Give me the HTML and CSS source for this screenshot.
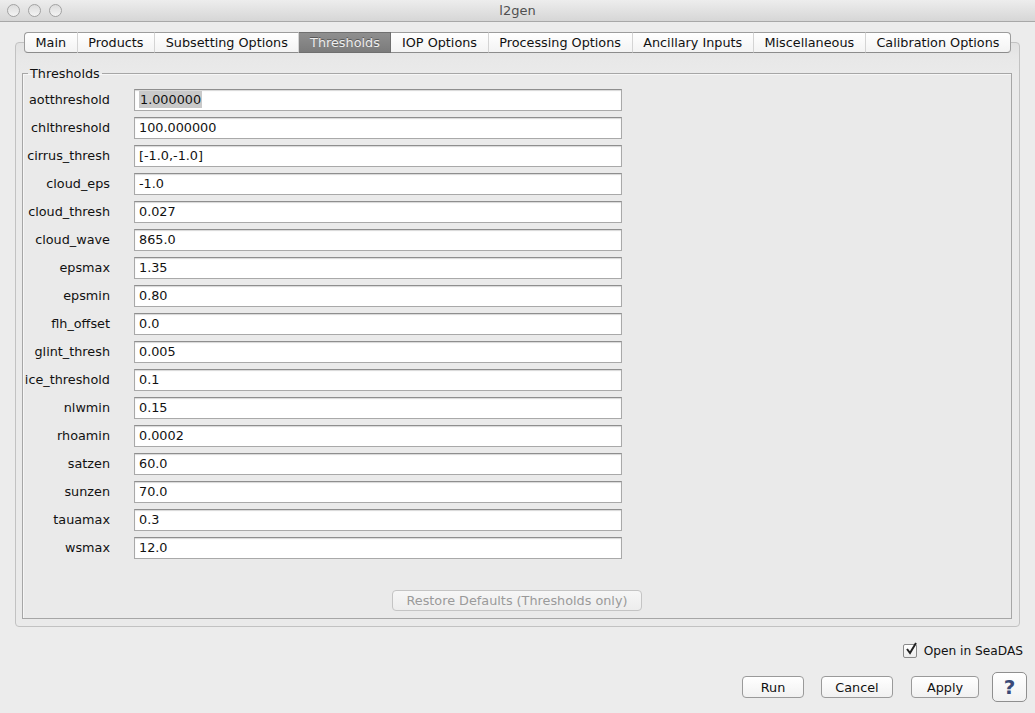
FILE: index.html
```html
<!DOCTYPE html>
<html lang="en">
<head>
    <meta charset="UTF-8">
    <title>l2gen</title>
    <link rel="stylesheet" href="styles.css">
</head>
<body>
    <div class="window">
        <!-- Title bar -->
        <div class="titlebar">
            <div class="lights">
                <span class="light"></span>
                <span class="light"></span>
                <span class="light"></span>
            </div>
            <div class="title">l2gen</div>
        </div>

        <!-- Tabs -->
        <div class="tabs">
            <div class="tab">Main</div>
            <div class="tab">Products</div>
            <div class="tab">Subsetting Options</div>
            <div class="tab active">Thresholds</div>
            <div class="tab">IOP Options</div>
            <div class="tab">Processing Options</div>
            <div class="tab">Ancillary Inputs</div>
            <div class="tab">Miscellaneous</div>
            <div class="tab">Calibration Options</div>
        </div>

        <div class="pane">
            <fieldset class="group">
                <legend>Thresholds</legend>
                <div class="rows" id="rows"></div>
                <div class="restore-row">
                    <button class="btn restore" disabled>Restore Defaults (Thresholds only)</button>
                </div>
            </fieldset>
        </div>

        <div class="open-row">
            <label class="check">
                <span class="box">
                    <svg width="14" height="14" viewBox="0 0 14 14">
                        <path d="M3 7 L6 11 L12 1" fill="none" stroke="#222" stroke-width="2"/>
                    </svg>
                </span>
                Open in SeaDAS
            </label>
        </div>

        <div class="actions">
            <button class="btn act run">Run</button>
            <button class="btn act cancel">Cancel</button>
            <button class="btn act apply">Apply</button>
            <button class="btn help">?</button>
        </div>
    </div>

    <script>
        // threshold params shown on this tab
        const params = [
            ['aotthreshold', '1.000000'],
            ['chlthreshold', '100.000000'],
            ['cirrus_thresh', '[-1.0,-1.0]'],
            ['cloud_eps', '-1.0'],
            ['cloud_thresh', '0.027'],
            ['cloud_wave', '865.0'],
            ['epsmax', '1.35'],
            ['epsmin', '0.80'],
            ['flh_offset', '0.0'],
            ['glint_thresh', '0.005'],
            ['ice_threshold', '0.1'],
            ['nlwmin', '0.15'],
            ['rhoamin', '0.0002'],
            ['satzen', '60.0'],
            ['sunzen', '70.0'],
            ['tauamax', '0.3'],
            ['wsmax', '12.0']
        ];

        const rows = document.getElementById('rows');
        params.forEach((p, i) => {
            const label = document.createElement('div');
            label.className = 'label';
            label.textContent = p[0];
            const field = document.createElement('div');
            field.className = 'field';
            if (i === 0) {
                field.innerHTML = '<span class="sel">' + p[1] + '</span>';
            } else {
                field.textContent = p[1];
            }
            rows.appendChild(label);
            rows.appendChild(field);
        });
    </script>
</body>
</html>
```

FILE: styles.css
```css
/* General */
html, body {
    margin: 0;
    padding: 0;
}

body {
    font-family: 'Lucida Grande', 'DejaVu Sans', sans-serif;
    font-size: 12.8px;
    color: #111;
    background-color: #ececec;
    width: 1035px;
    height: 713px;
    overflow: hidden;
}

.window {
    display: flex;
    flex-direction: column;
    height: 713px;
}

/* Title bar */
.titlebar {
    height: 21px;
    border-bottom: 1px solid #a8a8a8;
    background: linear-gradient(#ededed, #d6d6d6);
    display: flex;
    align-items: center;
    position: relative;
}

.lights {
    display: flex;
    gap: 8px;
    padding-left: 7px;
}

.light {
    width: 11px;
    height: 11px;
    border-radius: 50%;
    border: 1px solid #a2a2a2;
    background: linear-gradient(#dcdcdc, #f4f4f4);
}

.title {
    position: absolute;
    left: 0;
    right: 0;
    text-align: center;
    color: #505050;
    font-size: 13px;
}

/* Tabs */
.tabs {
    display: flex;
    justify-content: center;
    margin-top: 10px;
    margin-bottom: -11px;
    position: relative;
    z-index: 1;
}

.tab {
    height: 19px;
    line-height: 19px;
    padding: 0 10.6px;
    background: linear-gradient(#ffffff, #f3f3f3);
    border-top: 1px solid #9c9c9c;
    border-bottom: 1px solid #8c8c8c;
    border-right: 1px solid #d4d4d4;
}

.tab:first-child {
    border-left: 1px solid #9c9c9c;
    border-radius: 4px 0 0 4px;
}

.tab:last-child {
    border-right: 1px solid #9c9c9c;
    border-radius: 0 4px 4px 0;
}

.tab.active {
    background: linear-gradient(#8f8f8f, #7b7b7b);
    color: #eeeeee;
    border-color: #6f6f6f;
    text-shadow: 0 -1px 0 #5a5a5a;
}

/* Tab pane */
.pane {
    margin: 0 15px;
    height: 583px;
    border: 1px solid #c2c2c2;
    border-radius: 4px;
    background: linear-gradient(#e2e2e2 0, #e8e8e8 16px, #eaeaea 30px);
    padding: 0 7px 0 6px;
    display: flex;
}

.group {
    flex: 1;
    margin: 23px 0 7px 0;
    padding: 0;
    border: 1px solid #a6a6a6;
    box-shadow: inset 1px 1px 0 #f6f6f6;
    display: flex;
    flex-direction: column;
    min-width: 0;
}

.group legend {
    margin-left: 5px;
    padding: 0 2px;
    color: #111;
}

/* Rows */
.rows {
    display: grid;
    grid-template-columns: 87px 488px;
    column-gap: 24px;
    row-gap: 6px;
    padding-top: 8px;
}

.label {
    text-align: right;
    line-height: 22px;
    height: 22px;
}

.field {
    height: 20px;
    line-height: 20px;
    border: 1px solid #a9a9a9;
    border-top-color: #8e8e8e;
    background-color: #fff;
    box-shadow: inset 0 1px 1px #d8d8d8;
    padding-left: 4px;
}

.sel {
    background-color: #c9c9c9;
    padding: 1px 1px;
}

.restore-row {
    margin-top: auto;
    display: flex;
    justify-content: center;
    padding-bottom: 7px;
}

/* Buttons */
.btn {
    font-family: inherit;
    font-size: 12.8px;
    border: 1px solid #9a9a9a;
    border-radius: 4px;
    background: linear-gradient(#ffffff, #f1f1f1);
    color: #111;
    padding: 0;
}

.restore {
    width: 250px;
    height: 21px;
    color: #9a9a9a;
    border-color: #c4c4c4;
    background: linear-gradient(#f6f6f6, #ededed);
}

/* Open in SeaDAS */
.open-row {
    display: flex;
    justify-content: flex-end;
    padding: 17px 12px 0 0;
}

.check {
    display: flex;
    align-items: center;
    gap: 7px;
    font-size: 12.2px;
}

.box {
    width: 12px;
    height: 12px;
    border: 1px solid #8a8a8a;
    border-radius: 2px;
    background: linear-gradient(#ffffff, #ededed);
    position: relative;
}

.box svg {
    position: absolute;
    left: 0;
    top: -3px;
}

/* Bottom actions */
.actions {
    display: flex;
    justify-content: flex-end;
    align-items: center;
    padding: 14px 8px 0 0;
}

.act {
    height: 22px;
}

.run {
    width: 62px;
    margin-right: 17px;
}

.cancel {
    width: 72px;
    margin-right: 18px;
}

.apply {
    width: 68px;
    margin-right: 13px;
}

.help {
    width: 35px;
    height: 30px;
    font-family: 'DejaVu Sans', sans-serif;
    font-weight: bold;
    font-size: 20px;
    color: #3a4a78;
    border-color: #8f8f8f;
    border-radius: 5px;
}
```
